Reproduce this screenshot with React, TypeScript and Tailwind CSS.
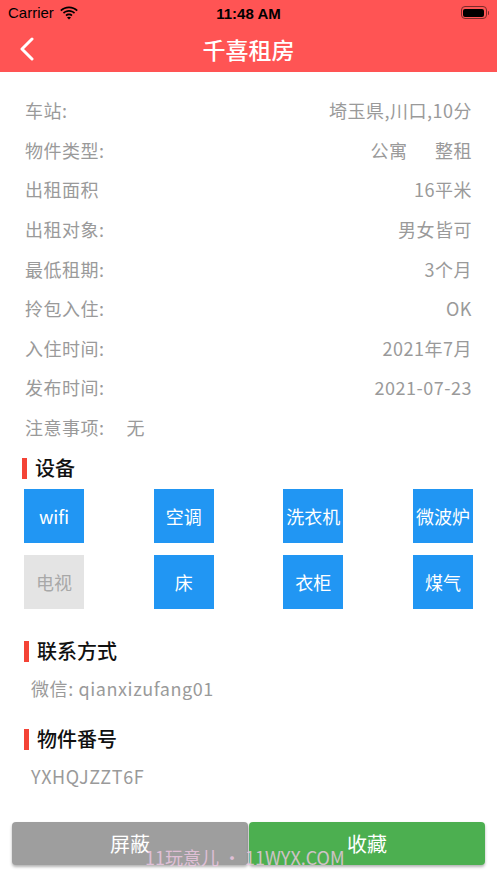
const font = { fontFamily: '"Noto Sans CJK SC", "Noto Sans", sans-serif' };

const infoRows: [string, string][] = [
  ["车站:", "埼玉県,川口,10分"],
  ["物件类型:", "公寓　  整租"],
  ["出租面积", "16平米"],
  ["出租对象:", "男女皆可"],
  ["最低租期:", "3个月"],
  ["拎包入住:", "OK"],
  ["入住时间:", "2021年7月"],
  ["发布时间:", "2021-07-23"],
];

const equipmentRows = [
  [
    { name: "wifi", on: true },
    { name: "空调", on: true },
    { name: "洗衣机", on: true },
    { name: "微波炉", on: true },
  ],
  [
    { name: "电视", on: false },
    { name: "床", on: true },
    { name: "衣柜", on: true },
    { name: "煤气", on: true },
  ],
];

function StatusBar() {
  return (
    <div className="relative flex h-[25px] items-center px-[8px] text-black">
      <span className="text-[15px] leading-none" style={{ fontFamily: '"Liberation Sans", sans-serif' }}>
        Carrier
      </span>
      <svg className="ml-[6px] h-[14px] w-[18px]" viewBox="0 0 18 14" fill="black">
        <path d="M9 2.2c2.9 0 5.6 1.1 7.6 3l1.2-1.3C15.5 1.7 12.4.4 9 .4S2.5 1.7.2 3.9l1.2 1.3c2-1.9 4.7-3 7.6-3z" />
        <path d="M9 5.8c1.9 0 3.6.7 4.9 1.9l1.2-1.3C13.5 4.9 11.3 4 9 4S4.5 4.9 2.9 6.4l1.2 1.3C5.4 6.5 7.1 5.8 9 5.8z" />
        <path d="M9 9.3c.9 0 1.7.3 2.3.9l1.2-1.3C11.6 8 10.4 7.5 9 7.5S6.4 8 5.5 8.9l1.2 1.3c.6-.6 1.4-.9 2.3-.9z" />
        <path d="M9 13.6l2-2.1c-.5-.5-1.2-.8-2-.8s-1.5.3-2 .8z" />
      </svg>
      <span
        className="absolute left-1/2 top-1/2 -translate-x-1/2 -translate-y-1/2 text-[15px] font-bold leading-none"
        style={{ fontFamily: '"Liberation Sans", sans-serif' }}
      >
        11:48 AM
      </span>
      <div className="ml-auto flex items-center">
        <div className="flex h-[13px] w-[26px] items-center rounded-[4px] border border-[#7a2a2a] p-[1.5px]">
          <div className="h-full w-full rounded-[2px] bg-black" />
        </div>
        <div className="ml-[1px] h-[4px] w-[1.5px] rounded-r bg-[#7a2a2a]" />
      </div>
    </div>
  );
}

function SectionTitle({ title, indent }: { title: string; indent: string }) {
  return (
    <div className={`flex h-[22px] items-center ${indent}`}>
      <div className="h-[21px] w-[5px] bg-[#f44336]" />
      <span className="ml-[8px] text-[20px] font-medium leading-none text-[#111]">{title}</span>
    </div>
  );
}

export default function App() {
  return (
    <div className="relative h-[883px] w-[497px] overflow-hidden bg-white" style={font}>
      <div className="h-[72px] bg-[#ff5454]">
        <StatusBar />
        <div className="relative flex h-[47px] items-center">
          <svg className="ml-[19px] h-[24px] w-[16px]" viewBox="0 0 16 24" fill="none" stroke="white" strokeWidth={3} strokeLinecap="round" strokeLinejoin="round">
            <path d="M13 2L3 12l10 10" />
          </svg>
          <span className="absolute left-1/2 top-1/2 -translate-x-1/2 -translate-y-1/2 text-[23px] font-medium leading-none text-white">
            千喜租房
          </span>
        </div>
      </div>

      <div className="px-[25px] pt-[19px] text-[18px] tracking-[0.5px] text-[#9a9a9a]">
        {infoRows.map(([label, value]) => (
          <div key={label} className="flex h-[39.6px] items-center justify-between">
            <span>{label}</span>
            <span className="whitespace-pre">{value}</span>
          </div>
        ))}
        <div className="flex h-[39.6px] items-center">
          <span>注意事项:</span>
          <span className="ml-[22px]">无</span>
        </div>
      </div>

      <div className="mt-[10px]">
        <SectionTitle title="设备" indent="ml-[22px]" />
      </div>

      <div className="mt-[10px] flex flex-col gap-[12px] px-[24px]">
        {equipmentRows.map((row, r) => (
          <div key={r} className="flex justify-between">
            {row.map((item) => (
              <div
                key={item.name}
                className={`flex h-[54px] w-[60px] items-center justify-center text-[18px] ${
                  item.on ? "bg-[#2196f3] text-white" : "bg-[#e4e4e4] text-[#a8a8a8]"
                }`}
              >
                {item.name}
              </div>
            ))}
          </div>
        ))}
      </div>

      <div className="mt-[31px]">
        <SectionTitle title="联系方式" indent="ml-[24px]" />
      </div>
      <div className="ml-[31px] mt-[15px] flex h-[22px] items-center text-[18px] tracking-[0.6px] text-[#9a9a9a]">
        微信: qianxizufang01
      </div>

      <div className="mt-[29px]">
        <SectionTitle title="物件番号" indent="ml-[24px]" />
      </div>
      <div className="ml-[31px] mt-[15px] flex h-[22px] items-center text-[18px] tracking-[0.6px] text-[#9a9a9a]">
        YXHQJZZT6F
      </div>

      <div className="mx-[12px] mt-[35px] flex gap-[1px]">
        <button className="flex h-[43px] flex-1 items-center justify-center rounded-[4px] bg-[#9e9e9e] text-[20px] text-white shadow-[0_2px_3px_rgba(0,0,0,0.3)]">
          屏蔽
        </button>
        <button className="flex h-[43px] flex-1 items-center justify-center rounded-[4px] bg-[#4caf50] text-[20px] text-white shadow-[0_2px_3px_rgba(0,0,0,0.3)]">
          收藏
        </button>
      </div>

      <div className="pointer-events-none absolute left-[145px] top-[848px] text-[18px] leading-none text-[#f0c8e4] opacity-80">
        11玩意儿 • 11WYX.COM
      </div>
    </div>
  );
}
